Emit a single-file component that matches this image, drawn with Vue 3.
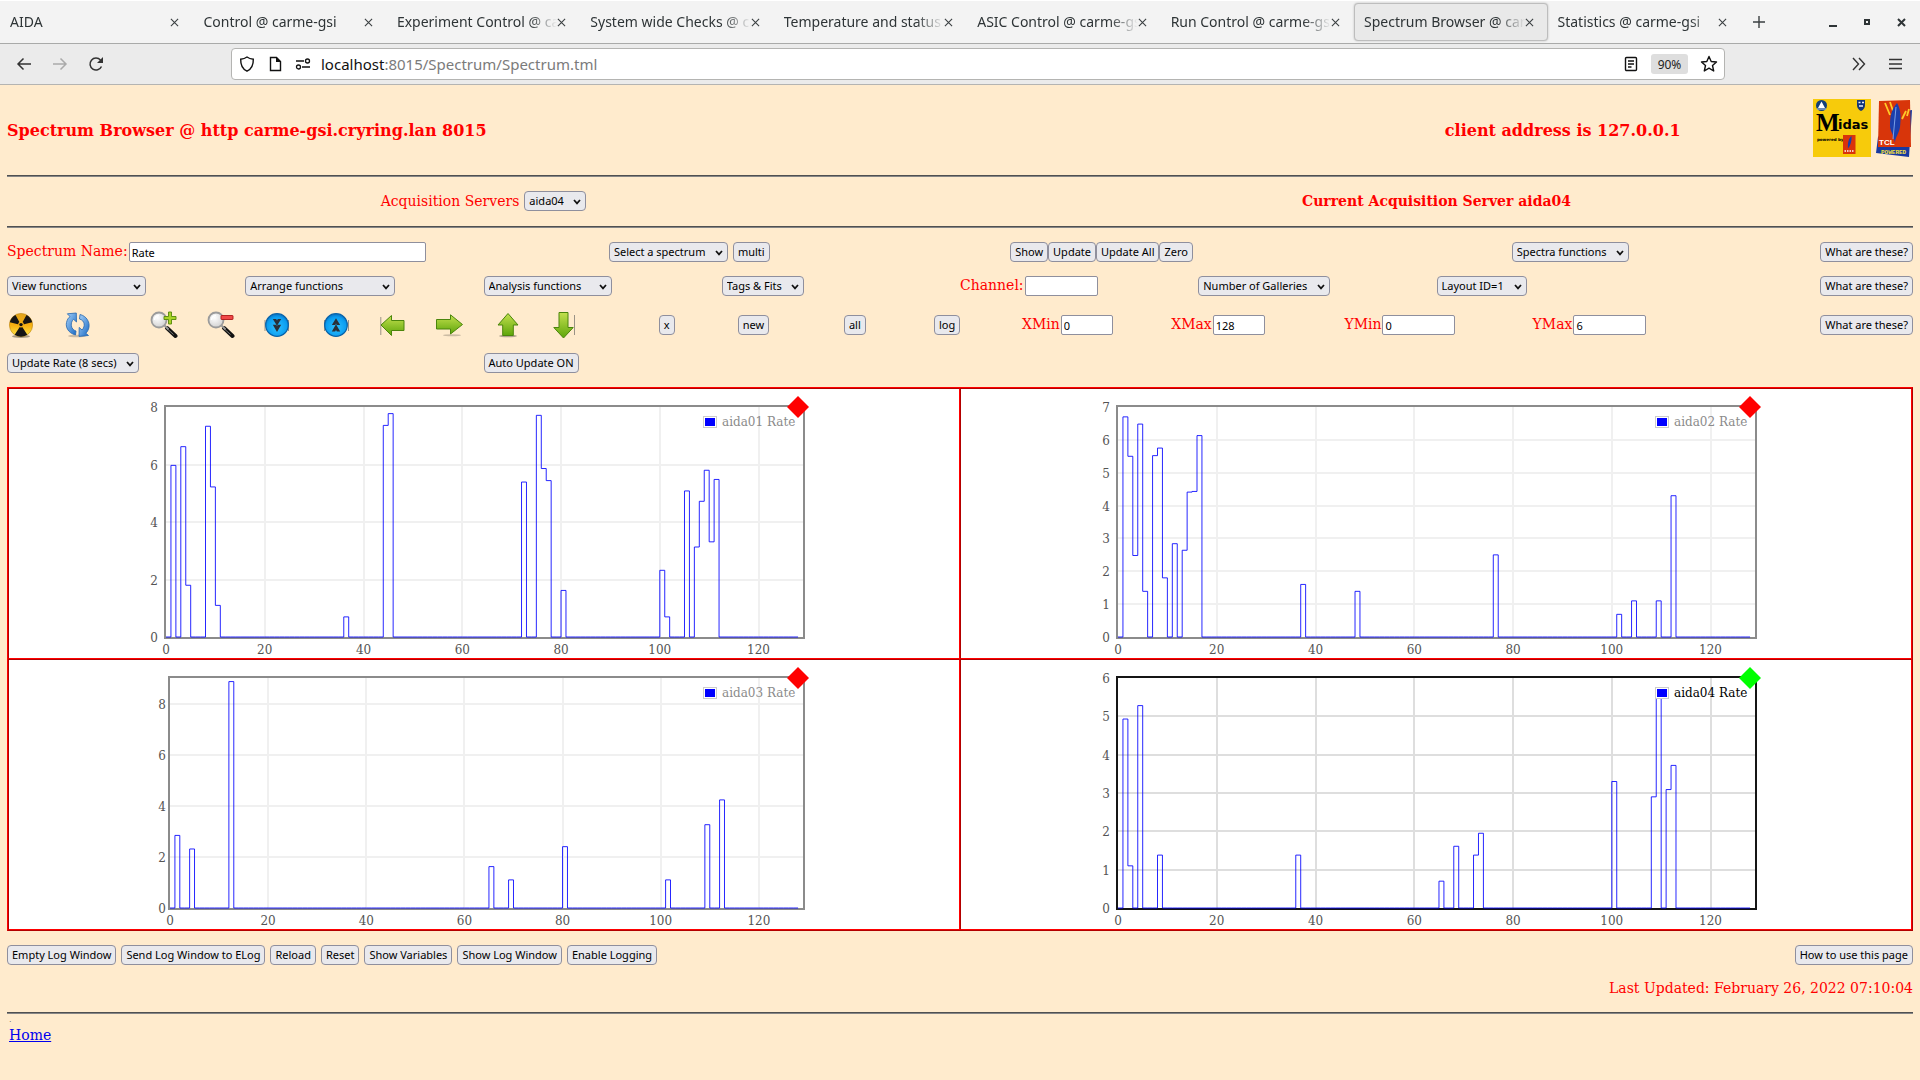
<template>
  <svg class="defs" aria-hidden="true">
    <defs>
      <linearGradient id="gold" x1="0" y1="0" x2="0" y2="1">
        <stop offset="0" stop-color="#e0a31c"/><stop offset="0.5" stop-color="#f5ad10"/><stop offset="1" stop-color="#ffe94a"/>
      </linearGradient>
      <linearGradient id="sky" x1="0" y1="0" x2="1" y2="1">
        <stop offset="0" stop-color="#a9d2f8"/><stop offset="1" stop-color="#1668c4"/>
      </linearGradient>
      <linearGradient id="green" x1="0" y1="0" x2="0" y2="1">
        <stop offset="0" stop-color="#c3e04e"/><stop offset="1" stop-color="#5ea50a"/>
      </linearGradient>
      <radialGradient id="blue" cx="0.5" cy="0.6" r="0.6">
        <stop offset="0" stop-color="#2fc0ff"/><stop offset="0.75" stop-color="#0a9df0"/><stop offset="1" stop-color="#0b6fc0"/>
      </radialGradient>
      <radialGradient id="lens" cx="0.4" cy="0.35" r="0.7">
        <stop offset="0" stop-color="#fff"/><stop offset="1" stop-color="#cfcfcf"/>
      </radialGradient>
    </defs>
    <symbol id="chevron" viewBox="0 0 8 6"><path d="M1 1l3 3.4L7 1" fill="none" stroke="#111" stroke-width="1.7"/></symbol>
    <symbol id="cross" viewBox="0 0 10 10"><path d="M1 1l8 8M9 1L1 9" fill="none" stroke="#3a3f41" stroke-width="1.2"/></symbol>
    <symbol id="i-radiation" viewBox="0 0 28 28">
      <ellipse cx="14" cy="25.4" rx="9" ry="1.6" fill="#000" opacity="0.35"/>
      <circle cx="14" cy="14" r="11.6" fill="url(#gold)" stroke="#b98310" stroke-width="0.6"/>
      <path d="M14 14L2.8 11.2A11.5 11.5 0 0 1 8.5 3.9zM14 14l11.2-2.8A11.5 11.5 0 0 0 19.5 3.9zM14 14l-6.3 9.7a11.5 11.5 0 0 0 12.6 0z" fill="#151515"/>
      <circle cx="14" cy="13.6" r="2.8" fill="#f3ae14"/><circle cx="14" cy="13.6" r="1.7" fill="#111"/>
    </symbol>
    <symbol id="i-refresh" viewBox="0 0 28 28">
      <ellipse cx="12" cy="25" rx="9" ry="1.3" fill="#000" opacity="0.2"/>
      <path d="M10.5 24C3 22 .5 16 1.5 11.5 2.2 8.5 3.5 6.7 5 5.5L2.3 2.8l9-.8.2 9-3-2.7C5 11.5 5.5 18.5 11 20z" fill="url(#sky)" stroke="#2466ae" stroke-width="0.8"/>
      <path d="M15 3.5C21.5 5 24.8 11 24 16c-.5 3-1.8 5-3.2 6.2l2.7 2.3-9.5.9.2-9 2.8 2.6c3.5-3.5 3-9.5-2.5-11z" fill="url(#sky)" stroke="#2466ae" stroke-width="0.8"/>
    </symbol>
    <symbol id="i-lens" viewBox="0 0 28 28">
      <path d="M17 17l8.5 8" stroke="#111" stroke-width="4" stroke-linecap="round"/>
      <path d="M18 18.5l5.5 5" stroke="#777" stroke-width="1"/>
      <path d="M14 14l4.5 4.5" stroke="#999" stroke-width="1.8"/>
      <circle cx="9" cy="9" r="7.5" fill="url(#lens)" stroke="#9b9b9b" stroke-width="1.8"/>
      <path d="M4.5 9a4.5 4.5 0 0 1 4.5-4.5" stroke="#fff" stroke-width="1.5" fill="none"/>
    </symbol>
    <symbol id="i-zoomin" viewBox="0 0 28 28">
      <use href="#i-lens"/>
      <path d="M18.5 1h3v4.5h4.5v3h-4.5v4.5h-3V8.5H14v-3h4.5z" fill="#a8d426" stroke="#54870a" stroke-width="0.9"/>
    </symbol>
    <symbol id="i-zoomout" viewBox="0 0 28 28">
      <use href="#i-lens"/>
      <rect x="14" y="4.5" width="12" height="4" rx="0.5" fill="#f04848" stroke="#ab1717" stroke-width="0.9"/>
    </symbol>
    <symbol id="i-down2" viewBox="0 0 28 28">
      <path d="M1 9v11M24.5 9v11" stroke="#555" stroke-width="0.6"/>
      <circle cx="13" cy="14" r="11.3" fill="url(#blue)" stroke="#0862a8" stroke-width="1.2"/>
      <path d="M8.8 8h3.4l.8 1.5.8-1.5h3.4L13 14.8zM8.8 13.7h3.4l.8 1.5.8-1.5h3.4L13 21z" fill="#2a2f38"/>
    </symbol>
    <symbol id="i-up2" viewBox="0 0 28 28">
      <path d="M3.5 9v11M27.5 9v11" stroke="#555" stroke-width="0.6"/>
      <circle cx="15" cy="14" r="11.3" fill="url(#blue)" stroke="#0862a8" stroke-width="1.2"/>
      <path d="M10.8 14h3.4l.8-1.5.8 1.5h3.4L15 7.2zM10.8 20.5h3.4l.8-1.5.8 1.5h3.4L15 13.3z" fill="#2a2f38"/>
    </symbol>
    <symbol id="i-left" viewBox="0 0 28 28">
      <path d="M2.8 6v18" stroke="#555" stroke-width="0.6"/>
      <path d="M3 14L13.5 4.5v5H26v10H13.5v5z" fill="url(#green)" stroke="#4a850c" stroke-width="1"/>
    </symbol>
    <symbol id="i-right" viewBox="0 0 28 28">
      <ellipse cx="17" cy="24.3" rx="9" ry="1" fill="#000" opacity="0.2"/>
      <path d="M27.5 13.5L15.5 3.8v4.7H1.5V18h14v5z" fill="url(#green)" stroke="#4a850c" stroke-width="1"/>
    </symbol>
    <symbol id="i-up" viewBox="0 0 28 28">
      <ellipse cx="13" cy="25" rx="9" ry="1.3" fill="#000" opacity="0.3"/>
      <path d="M13 2.5L23 14h-4.7v10.5H7.7V14H3z" fill="url(#green)" stroke="#4a850c" stroke-width="1"/>
    </symbol>
    <symbol id="i-down" viewBox="0 0 28 28">
      <path d="M23.5 4v20" stroke="#555" stroke-width="0.6"/>
      <path d="M12.5 27L2.8 16.5H8v-15h9v15h5.2z" fill="url(#green)" stroke="#4a850c" stroke-width="1"/>
    </symbol>
  </svg>

  <header class="browser">
    <div class="tab-bar">
      <div class="tabs">
        <div v-for="tab in tabs" :key="tab" class="tab" :class="{ active: tab === activeTab }">
          <span class="tab-title">{{ tab }}</span>
          <button class="plain" aria-label="Close tab"><svg width="9" height="9"><use href="#cross"/></svg></button>
        </div>
      </div>
      <button class="plain new-tab" aria-label="New tab">
        <svg width="14" height="14" viewBox="0 0 14 14"><path d="M7 1v12M1 7h12" stroke="#3a3f41" stroke-width="1.4"/></svg>
      </button>
      <div class="window-buttons">
        <button class="plain" aria-label="Minimize"><svg width="8" height="10" viewBox="0 0 8 10"><path d="M0 9h8" stroke="#2e3436" stroke-width="2"/></svg></button>
        <button class="plain" aria-label="Maximize"><svg width="8" height="8" viewBox="0 0 8 8"><rect x="2" y="2" width="4" height="4" fill="none" stroke="#2e3436" stroke-width="2"/></svg></button>
        <button class="plain" aria-label="Close"><svg width="9" height="9" viewBox="0 0 9 9"><path d="M1 1l7 7M8 1L1 8" stroke="#2e3436" stroke-width="2"/></svg></button>
      </div>
    </div>
    <div class="nav-bar">
      <div class="nav-buttons">
        <button class="plain" aria-label="Back"><svg width="16" height="16" viewBox="0 0 16 16"><path d="M15 8H2M7.5 2.5L2 8l5.5 5.5" fill="none" stroke="#333" stroke-width="1.5"/></svg></button>
        <button class="plain" aria-label="Forward"><svg width="16" height="16" viewBox="0 0 16 16"><path d="M1 8h13M8.5 2.5L14 8l-5.5 5.5" fill="none" stroke="#aaa" stroke-width="1.5"/></svg></button>
        <button class="plain" aria-label="Reload"><svg width="16" height="16" viewBox="0 0 16 16"><path d="M13.5 10.5A6 6 0 1 1 12.5 4" fill="none" stroke="#333" stroke-width="1.5"/><path d="M15 1v6H9z" fill="#333"/></svg></button>
      </div>
      <div class="url-bar">
        <svg width="16" height="16" viewBox="0 0 16 16"><path d="M8 1C6 2.5 4 3 1.7 3.2 1.5 9 3.5 13 8 15.2 12.5 13 14.5 9 14.3 3.2 12 3 10 2.5 8 1z" fill="none" stroke="#111" stroke-width="1.4"/></svg>
        <svg width="16" height="16" viewBox="0 0 16 16"><path d="M3.5 1.5h6l4 4v9h-10z" fill="none" stroke="#111" stroke-width="1.4"/><path d="M9 1v5h5z" fill="#111"/></svg>
        <svg width="16" height="16" viewBox="0 0 16 16"><path d="M1 5h8M7 11h8" stroke="#111" stroke-width="1.5"/><circle cx="12.5" cy="5" r="2" fill="none" stroke="#111" stroke-width="1.3"/><circle cx="3.5" cy="11" r="2" fill="none" stroke="#111" stroke-width="1.3"/></svg>
        <span class="url"><b>localhost</b>:8015/Spectrum/Spectrum.tml</span>
        <svg width="16" height="16" viewBox="0 0 16 16"><rect x="2.5" y="1.5" width="11" height="13" rx="1" fill="none" stroke="#111" stroke-width="1.4"/><path d="M5 5h6M5 8h6M5 11h3.5" stroke="#111" stroke-width="1.3"/></svg>
        <button class="zoom">90%</button>
        <svg width="18" height="18" viewBox="0 0 18 18"><path d="M9 1.5l2.2 5 5.3.5-4 3.5 1.2 5.5L9 13.2 4.3 16l1.2-5.5-4-3.5 5.3-.5z" fill="none" stroke="#111" stroke-width="1.4" stroke-linejoin="round"/></svg>
      </div>
      <div class="nav-menu">
        <button class="plain" aria-label="More tools"><svg width="14" height="14" viewBox="0 0 14 14"><path d="M1 1l5.5 6L1 13M7 1l5.5 6L7 13" fill="none" stroke="#333" stroke-width="1.4"/></svg></button>
        <button class="plain" aria-label="Menu"><svg width="13" height="12" viewBox="0 0 13 12"><path d="M0 1.5h13M0 6h13M0 10.5h13" stroke="#333" stroke-width="1.5"/></svg></button>
      </div>
    </div>
  </header>

  <main class="page">
    <div class="head">
      <h1>Spectrum Browser @ http carme-gsi.cryring.lan 8015</h1>
      <h2>client address is 127.0.0.1</h2>
      <div class="logos">
        <svg width="58" height="58" viewBox="0 0 58 58">
          <rect width="58" height="58" fill="#f7cb0b"/>
          <circle cx="8.5" cy="6.5" r="5.5" fill="#123f79"/>
          <path d="M8.5 2.5L12 9H5z" fill="#fff"/><path d="M4 10h9" stroke="#a8c0dc" stroke-width="1.2"/>
          <path d="M44 1h8v5q0 4-4 6-4-2-4-6z" fill="#12357a"/>
          <path d="M45.5 3.5h2M49 3.5h2M46 7h4" stroke="#e6ecff" stroke-width="1.3"/>
          <text x="3" y="32" class="logo-m">M</text>
          <text x="25" y="30" class="logo-idas">idas</text>
          <text x="4" y="42" class="logo-by">powered by</text>
          <rect x="30" y="36" width="12.5" height="19" fill="#d9330b"/>
          <path d="M38.5 37c-3 2.5-4 7-3.5 12.5 2.5-3 4-8 3.5-12.5z" fill="#1a3faa"/>
          <path d="M31.5 52h9" stroke="#fff" stroke-width="1.5" stroke-dasharray="1.5 1"/>
        </svg>
        <svg width="37" height="58" viewBox="0 0 37 58">
          <path d="M30 12l6-1-3 47L0 54l2-16z" fill="#1738a0"/>
          <path d="M3 2l31-1 1 47H2z" fill="#d8350a"/>
          <path d="M9 4l5 12M14 3l3 9M30 12l-4 8M33 10l-2 7" stroke="#ffc928" stroke-width="1.8" fill="none"/>
          <path d="M21 4c-6 7-7 14-7 23 0 5 3 7 4 13l1 4c0-6 4-9 5-16 1-8 1-18-3-24z" fill="#1b3fac"/>
          <path d="M20 8l-3 32" stroke="#79a0e8" stroke-width="1"/>
          <text x="3" y="46" class="logo-tcl">TCL</text>
          <text x="5" y="55" class="logo-pow">POWERED</text>
        </svg>
      </div>
    </div>
    <hr>
    <div class="servers">
      <div>
        <label for="server">Acquisition Servers</label>
        <span class="pick"><select id="server"><option>aida04</option></select><svg width="8" height="6"><use href="#chevron"/></svg></span>
      </div>
      <strong>Current Acquisition Server aida04</strong>
    </div>
    <hr>

    <section class="controls">
      <div class="row row-name">
        <div><label for="name">Spectrum Name:</label><input id="name" v-model="spectrumName" class="wide" type="text"></div>
        <div class="spaced">
          <span class="pick"><select aria-label="Select a spectrum"><option>Select a spectrum</option></select><svg width="8" height="6"><use href="#chevron"/></svg></span>
          <button class="btn">multi</button>
        </div>
        <div><button v-for="b in showButtons" :key="b" class="btn">{{ b }}</button></div>
        <div class="split">
          <span class="pick"><select aria-label="Spectra functions"><option>Spectra functions</option></select><svg width="8" height="6"><use href="#chevron"/></svg></span>
          <button class="btn">What are these?</button>
        </div>
      </div>

      <div class="row row-functions">
        <div v-for="f in functions" :key="f.text">
          <span class="pick" :class="f.size"><select :aria-label="f.text"><option>{{ f.text }}</option></select><svg width="8" height="6"><use href="#chevron"/></svg></span>
        </div>
        <div><label for="channel">Channel:</label><input id="channel" type="text" class="medium"></div>
        <div v-for="f in layouts" :key="f.text">
          <span class="pick"><select :aria-label="f.text"><option>{{ f.text }}</option></select><svg width="8" height="6"><use href="#chevron"/></svg></span>
        </div>
        <div class="end"><button class="btn">What are these?</button></div>
      </div>

      <div class="row row-tools">
        <button v-for="t in tools" :key="t.icon" class="plain" :aria-label="t.label"><svg width="28" height="28"><use :href="'#i-' + t.icon"/></svg></button>
        <div v-for="b in scaleButtons" :key="b"><button class="btn">{{ b }}</button></div>
        <div v-for="r in ranges" :key="r.id">
          <label :for="r.id">{{ r.id }}</label><input :id="r.id" v-model="r.value" type="text" :class="r.size">
        </div>
        <div class="end"><button class="btn">What are these?</button></div>
      </div>

      <div class="row row-update">
        <div><span class="pick"><select aria-label="Update Rate"><option>Update Rate (8 secs)</option></select><svg width="8" height="6"><use href="#chevron"/></svg></span></div>
        <div><button class="btn">Auto Update ON</button></div>
      </div>
    </section>

    <section class="gallery">
      <div v-for="c in charts" :key="c.name" class="cell">
        <svg class="chart" :class="{ selected: c.selected }" viewBox="0 0 680 269" role="img" :aria-label="c.name">
          <path class="grid" :d="gridPath(c)"/>
          <rect class="frame" :x="c.left - 1" y="17" :width="661 - c.left" height="232"/>
          <path class="curve" :d="curvePath(c)"/>
          <text v-for="x in xTicks" :key="'x' + x" class="tick" text-anchor="middle" :x="px(c, x)" y="265">{{ x }}</text>
          <text v-for="y in yTicks(c)" :key="'y' + y" class="tick" text-anchor="end" :x="c.labelRight" :y="py(c, y) + 5">{{ y }}</text>
          <rect x="559.5" y="27.5" width="13" height="11" fill="#fff" stroke="#ccc"/>
          <rect x="561" y="29" width="10" height="8" fill="#00f"/>
          <text class="legend" x="578" y="37">{{ c.name }}</text>
          <path d="M654 7l11 11-11 11-11-11z" :fill="c.selected ? '#0f0' : '#f00'"/>
        </svg>
      </div>
    </section>

    <div class="log-buttons">
      <div><button v-for="b in logButtons" :key="b" class="btn">{{ b }}</button></div>
      <button class="btn">How to use this page</button>
    </div>
    <p class="updated">Last Updated: February 26, 2022 07:10:04</p>
    <hr>
    <footer>
      <span class="dot">.</span>
      <a href="#">Home</a>
    </footer>
  </main>
</template>

<script setup>
import { ref } from "vue"

const activeTab = "Spectrum Browser @ carme-gsi"
const tabs = [
  "AIDA",
  "Control @ carme-gsi",
  "Experiment Control @ carme-gsi",
  "System wide Checks @ carme-gsi",
  "Temperature and status scan",
  "ASIC Control @ carme-gsi",
  "Run Control @ carme-gsi",
  activeTab,
  "Statistics @ carme-gsi"
]

const spectrumName = ref("Rate")
const showButtons = ["Show", "Update", "Update All", "Zero"]
const scaleButtons = ["x", "new", "all", "log"]
const logButtons = ["Empty Log Window", "Send Log Window to ELog", "Reload", "Reset", "Show Variables", "Show Log Window", "Enable Logging"]

const functions = [
  { text: "View functions", size: "size-view" },
  { text: "Arrange functions", size: "size-arrange" },
  { text: "Analysis functions", size: "size-analysis" },
  { text: "Tags & Fits" }
]
const layouts = [{ text: "Number of Galleries" }, { text: "Layout ID=1" }]

const tools = [
  { icon: "radiation", label: "Clear" },
  { icon: "refresh", label: "Refresh" },
  { icon: "zoomin", label: "Zoom in" },
  { icon: "zoomout", label: "Zoom out" },
  { icon: "down2", label: "Compress" },
  { icon: "up2", label: "Expand" },
  { icon: "left", label: "Left" },
  { icon: "right", label: "Right" },
  { icon: "up", label: "Up" },
  { icon: "down", label: "Down" }
]

const ranges = ref([
  { id: "XMin", value: "0", size: "small" },
  { id: "XMax", value: "128", size: "small" },
  { id: "YMin", value: "0", size: "medium" },
  { id: "YMax", value: "6", size: "medium" }
])

// channel: rate, channels that are not listed are empty
const charts = [
  {
    name: "aida01 Rate", left: 22, labelRight: 14, max: 8, step: 2,
    bins: {
      1: 5.97, 3: 6.62, 4: 1.8, 8: 7.33, 9: 5.22, 10: 1.1, 36: 0.7, 44: 7.36, 45: 7.77, 72: 5.39,
      75: 7.71, 76: 5.86, 77: 5.44, 80: 1.62, 100: 2.32, 101: 0.7, 105: 5.08, 107: 3.13, 108: 4.72,
      109: 5.8, 110: 3.31, 111: 5.48
    }
  },
  {
    name: "aida02 Rate", left: 22, labelRight: 14, max: 7, step: 1,
    bins: {
      1: 6.7, 2: 5.5, 3: 2.48, 4: 6.48, 5: 1.39, 7: 5.52, 8: 5.75, 9: 1.8, 11: 2.84, 13: 2.64,
      14: 4.41, 15: 4.43, 16: 6.13, 37: 1.6, 48: 1.39, 76: 2.5, 101: 0.69, 104: 1.1, 109: 1.1, 112: 4.3
    }
  },
  {
    name: "aida03 Rate", left: 26, labelRight: 22, max: 9, step: 2,
    bins: { 1: 2.84, 4: 2.31, 12: 8.86, 65: 1.62, 69: 1.1, 80: 2.4, 101: 1.1, 109: 3.26, 112: 4.23 }
  },
  {
    name: "aida04 Rate", left: 22, labelRight: 14, max: 6, step: 1, selected: true,
    bins: {
      1: 4.93, 2: 1.1, 4: 5.28, 8: 1.38, 36: 1.38, 65: 0.7, 68: 1.61, 72: 1.38, 73: 1.95,
      100: 3.3, 108: 2.9, 109: 5.67, 111: 3.09, 112: 3.72
    }
  }
]

const xTicks = [0, 20, 40, 60, 80, 100, 120]

const yTicks = (c) => {
  const ticks = []
  for (let y = 0; y <= c.max; y += c.step) ticks.push(y)
  return ticks
}

const px = (c, x) => c.left + (x * (659 - c.left)) / 129
const py = (c, y) => 248 - (y * 230) / c.max

const gridPath = (c) => {
  const down = xTicks.slice(1).map(x => `M${Math.round(px(c, x))} 18V248`)
  const across = yTicks(c).filter(y => y > 0 && y < c.max).map(y => `M${c.left} ${Math.round(py(c, y))}H659`)
  return down.concat(across).join("")
}

const curvePath = (c) => {
  let d = `M${px(c, 0)} 248`
  for (let ch = 0; ch < 128; ch++) {
    d += `V${py(c, c.bins[ch] || 0).toFixed(2)}H${px(c, ch + 1).toFixed(2)}`
  }
  return d + "V248"
}
</script>

<style>
html, body{
  background-color: #ffebcd;
}
</style>

<style scoped>
.defs{
  position: absolute;
  width: 0;
  height: 0;
}
.plain{
  display: flex;
  padding: 0;
  border: none;
  background: none;
}
.browser{
  font-family: "Noto Sans", sans-serif;
  color: #2e3436;
}
.tab-bar{
  display: flex;
  align-items: center;
  height: 42px;
  border-top: 1px solid white;
  border-bottom: 1px solid #a9aaa9;
  background-color: #f3f3f3;
}
.tabs{
  display: flex;
  flex: 1;
  min-width: 0;
}
.tab{
  display: flex;
  align-items: center;
  flex: 1 1 0;
  min-width: 0;
  height: 36px;
  padding: 0 13px 0 9px;
  border: 1px solid transparent;
  border-radius: 4px;
}
.tab.active{
  background-color: #e9e9e9;
  border-color: #bdbdbd;
  box-shadow: 0 0 2px #b5b5b5;
}
.tab-title{
  flex: 1;
  min-width: 0;
  padding-bottom: 2px;
  overflow: hidden;
  white-space: nowrap;
  font-size: 14px;
  -webkit-mask-image: linear-gradient(to left, transparent, black 28px);
  mask-image: linear-gradient(to left, transparent, black 28px);
}
.new-tab{
  width: 36px;
  justify-content: center;
}
.window-buttons{
  display: flex;
  align-items: center;
  gap: 26px;
  padding: 0 14px 0 52px;
}
.nav-bar{
  display: flex;
  align-items: center;
  height: 40px;
  border-bottom: 1px solid #b4b4b2;
  background-color: #ebebeb;
}
.nav-buttons{
  display: flex;
  gap: 20px;
  width: 215px;
  padding-left: 16px;
}
.url-bar{
  display: flex;
  align-items: center;
  gap: 12px;
  flex: 1;
  height: 30px;
  padding: 0 6px 0 7px;
  border: 1px solid #b4b4b2;
  border-radius: 4px;
  background-color: white;
}
.url{
  flex: 1;
  margin-left: -2px;
  padding-bottom: 1px;
  font-size: 15px;
  color: #7b7b7b;
}
.url b{
  font-weight: normal;
  color: #111;
}
.zoom{
  width: 37px;
  height: 20px;
  padding: 0;
  border: none;
  border-radius: 3px;
  background-color: #dedede;
  color: #222;
  font-family: inherit;
  font-size: 12px;
}
.nav-menu{
  display: flex;
  align-items: center;
  justify-content: flex-end;
  gap: 23px;
  width: 177px;
  padding-right: 18px;
}

.page{
  padding: 0 7px;
  font-family: "DejaVu Serif", serif;
  font-size: 14px;
  line-height: 20px;
  color: red;
}
.head{
  display: grid;
  grid-template-columns: 1304fr 500fr 100px;
  align-items: center;
  height: 90px;
}
h1, h2{
  margin: 0;
  padding-top: 2px;
  font-size: 16px;
  font-weight: bold;
}
h2{
  text-align: center;
}
.logos{
  display: flex;
  justify-content: flex-end;
  gap: 5px;
  padding-bottom: 4px;
}
.logo-m{
  font: bold 25px "Liberation Serif", serif;
}
.logo-idas{
  font: bold 13px "DejaVu Sans", sans-serif;
}
.logo-by{
  font: bold 4px "DejaVu Sans", sans-serif;
}
.logo-tcl{
  font: bold 8px "Liberation Sans", sans-serif;
  fill: white;
}
.logo-pow{
  font: bold 6px "Liberation Mono", monospace;
  fill: #f5e03c;
}
hr{
  margin: 0;
  border: none;
  border-top: 1px solid #505050;
  border-bottom: 1px solid #868686;
}
.servers{
  display: grid;
  grid-template-columns: 1fr 1fr;
  align-items: center;
  justify-items: center;
  height: 47px;
  padding-bottom: 2px;
}
.servers div{
  display: flex;
  gap: 5px;
}

.btn, select, input{
  box-sizing: border-box;
  height: 20px;
  margin: 0;
  border: 1px solid #8f8f9d;
  font-family: "Noto Sans", sans-serif;
  font-size: 11px;
  line-height: 16px;
  color: black;
}
.btn{
  padding: 0 4px;
  border-radius: 4px;
  background-color: #e9e9ed;
  white-space: nowrap;
}
select{
  appearance: none;
  width: 100%;
  padding: 0 21px 0 4px;
  border-radius: 4px;
  background-color: #e9e9ed;
}
.pick{
  display: inline-flex;
  position: relative;
}
.pick svg{
  position: absolute;
  top: 8px;
  right: 5px;
  pointer-events: none;
}
input{
  padding: 0 2px;
  border-radius: 2px;
  background-color: white;
}
.wide{
  width: 297px;
}
.medium{
  width: 73px;
}
.small{
  width: 52px;
}
.size-view{
  width: 139px;
}
.size-arrange{
  width: 150px;
}
.size-analysis{
  width: 128px;
}

.controls{
  padding: 7px 0 8px;
}
.row{
  display: grid;
  align-items: center;
}
.row > div{
  display: flex;
  align-items: center;
}
.row label{
  padding: 0 1px 2px 0;
}
.row .spaced{
  gap: 5px;
}
.row .split{
  justify-content: space-between;
}
.row .end{
  justify-content: flex-end;
}
.row-name{
  grid-template-columns: 6fr 4fr 5fr 4fr;
  height: 34px;
}
.row-functions{
  grid-template-columns: repeat(8, minmax(0, 1fr));
  height: 34px;
}
.row-tools{
  grid-template-columns: 58fr 85fr 57fr 57fr 57fr 57fr 57fr 59fr 56fr 108fr 79fr 106fr 90fr 88fr 149fr 173fr 188fr 200fr 180fr;
  height: 44px;
}
.row-update{
  grid-template-columns: 1fr 3fr;
  height: 32px;
}

.gallery{
  display: grid;
  grid-template-columns: 1fr 1fr;
  border: 1px solid;
  border-color: #f00 #b20000 #b20000 #f00;
  background-color: white;
}
.cell{
  display: flex;
  justify-content: center;
  border: 1px solid;
  border-color: #b20000 #f00 #f00 #b20000;
}
.chart{
  display: block;
  width: 680px;
  max-width: 100%;
}
.grid{
  stroke: rgba(0, 0, 0, 0.06);
  stroke-width: 2px;
}
.frame{
  fill: none;
  stroke: #8b8b8b;
  stroke-width: 2px;
}
.curve{
  fill: none;
  stroke: #00f;
  stroke-opacity: 0.85;
}
.tick, .legend{
  font-family: "DejaVu Serif", serif;
  font-size: 12px;
  fill: #545454;
}
.legend{
  fill: #8b8b8b;
}
.selected .grid{
  stroke: rgba(0, 0, 0, 0.13);
}
.selected .frame{
  stroke: #151515;
}
.selected .legend{
  fill: black;
}

.log-buttons{
  display: flex;
  justify-content: space-between;
  padding-top: 14px;
}
.log-buttons div{
  display: flex;
  gap: 5px;
}
.updated{
  margin: 13px 0 14px;
  text-align: right;
}
footer{
  display: flex;
  flex-direction: column;
  align-items: flex-start;
  padding-left: 2px;
}
.dot{
  font-size: 8px;
  line-height: 11px;
  color: #555;
}
footer a{
  color: #00e;
}
</style>
